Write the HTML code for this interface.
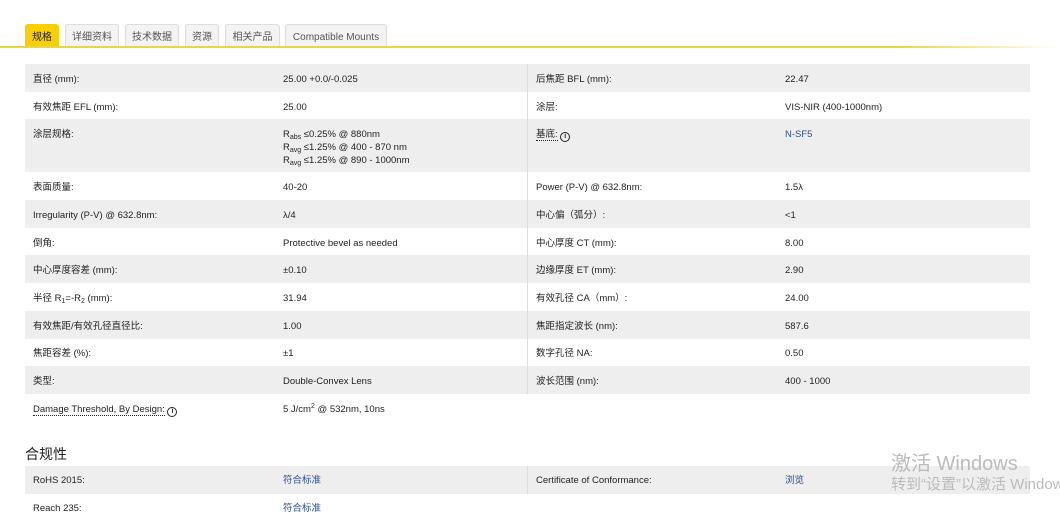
<!DOCTYPE html>
<html><head><meta charset="utf-8"><style>
*{margin:0;padding:0;box-sizing:border-box}
body{width:1060px;height:523px;overflow:hidden;background:#fff;font-family:"Liberation Sans","Noto Sans CJK SC",sans-serif;font-size:9.5px;color:#222;position:relative}
.tab{position:absolute;top:24px;height:23px;border:1px solid #ddd;border-bottom:none;background:#f3f3f3;border-radius:3px 3px 0 0;color:#555;font-size:10px;text-align:center;line-height:26px}
.tab.a{background:#f8cf00;border-color:#f8cf00;color:#222}
.bar{position:absolute;left:0;top:46px;width:1060px;height:2px;background:linear-gradient(90deg,#e9d54a 85%,#fff)}
.r{position:absolute;height:28px}
.g{background:#eee}
.t{position:absolute;line-height:1.4;margin-top:2px}
.lk{color:#2a4f8f}
sub{font-size:7px;vertical-align:-2px;line-height:0}
sup{font-size:7px;vertical-align:4px;line-height:0}
.dl{border-bottom:1px dotted #222}
.i{display:inline-block;width:10px;height:10px;border:1.5px solid #222;border-radius:50%;font-size:7px;line-height:7px;text-align:center;font-weight:bold;vertical-align:-1px}
.vl{position:absolute;left:527px;top:64px;width:1px;height:330px;background:#ddd}
.wm{position:absolute;color:#bbb;left:891px;white-space:nowrap}
</style></head><body>
<div class="tab a" style="left:25px;width:34px">规格</div>
<div class="tab" style="left:65px;width:54px">详细资料</div>
<div class="tab" style="left:125px;width:54px">技术数据</div>
<div class="tab" style="left:185px;width:34px">资源</div>
<div class="tab" style="left:225px;width:55px">相关产品</div>
<div class="tab" style="left:285px;width:102px">Compatible Mounts</div>
<div class="bar"></div>

<div class="r g" style="left:25px;width:1005px;top:64px"></div>
<div class="r g" style="left:25px;width:1005px;top:119px;height:53px"></div>
<div class="r g" style="left:25px;width:1005px;top:200px"></div>
<div class="r g" style="left:25px;width:1005px;top:255px"></div>
<div class="r g" style="left:25px;width:1005px;top:311px"></div>
<div class="r g" style="left:25px;width:1005px;top:366px"></div>
<div class="vl"></div>

<div class="t" style="left:33px;top:71px">直径 (mm):</div><div class="t" style="left:283px;top:71px">25.00 +0.0/-0.025</div>
<div class="t" style="left:536px;top:71px">后焦距 BFL (mm):</div><div class="t" style="left:785px;top:71px">22.47</div>

<div class="t" style="left:33px;top:99px">有效焦距 EFL (mm):</div><div class="t" style="left:283px;top:99px">25.00</div>
<div class="t" style="left:536px;top:99px">涂层:</div><div class="t" style="left:785px;top:99px">VIS-NIR (400-1000nm)</div>

<div class="t" style="left:33px;top:126px">涂层规格:</div>
<div class="t" style="left:283px;top:126px;line-height:13px">R<sub>abs</sub> ≤0.25% @ 880nm<br>R<sub>avg</sub> ≤1.25% @ 400 - 870 nm<br>R<sub>avg</sub> ≤1.25% @ 890 - 1000nm</div>
<div class="t" style="left:536px;top:126px"><span class="dl">基底:</span> <span class="i">i</span></div><div class="t lk" style="left:785px;top:126px">N-SF5</div>

<div class="t" style="left:33px;top:179px">表面质量:</div><div class="t" style="left:283px;top:179px">40-20</div>
<div class="t" style="left:536px;top:179px">Power (P-V) @ 632.8nm:</div><div class="t" style="left:785px;top:179px">1.5λ</div>

<div class="t" style="left:33px;top:207px">Irregularity (P-V) @ 632.8nm:</div><div class="t" style="left:283px;top:207px">λ/4</div>
<div class="t" style="left:536px;top:207px">中心偏（弧分）:</div><div class="t" style="left:785px;top:207px">&lt;1</div>

<div class="t" style="left:33px;top:235px">倒角:</div><div class="t" style="left:283px;top:235px">Protective bevel as needed</div>
<div class="t" style="left:536px;top:235px">中心厚度 CT (mm):</div><div class="t" style="left:785px;top:235px">8.00</div>

<div class="t" style="left:33px;top:262px">中心厚度容差 (mm):</div><div class="t" style="left:283px;top:262px">±0.10</div>
<div class="t" style="left:536px;top:262px">边缘厚度 ET (mm):</div><div class="t" style="left:785px;top:262px">2.90</div>

<div class="t" style="left:33px;top:290px">半径 R<sub>1</sub>=-R<sub>2</sub> (mm):</div><div class="t" style="left:283px;top:290px">31.94</div>
<div class="t" style="left:536px;top:290px">有效孔径 CA（mm）:</div><div class="t" style="left:785px;top:290px">24.00</div>

<div class="t" style="left:33px;top:318px">有效焦距/有效孔径直径比:</div><div class="t" style="left:283px;top:318px">1.00</div>
<div class="t" style="left:536px;top:318px">焦距指定波长 (nm):</div><div class="t" style="left:785px;top:318px">587.6</div>

<div class="t" style="left:33px;top:345px">焦距容差 (%):</div><div class="t" style="left:283px;top:345px">±1</div>
<div class="t" style="left:536px;top:345px">数字孔径 NA:</div><div class="t" style="left:785px;top:345px">0.50</div>

<div class="t" style="left:33px;top:373px">类型:</div><div class="t" style="left:283px;top:373px">Double-Convex Lens</div>
<div class="t" style="left:536px;top:373px">波长范围 (nm):</div><div class="t" style="left:785px;top:373px">400 - 1000</div>

<div class="t" style="left:33px;top:401px"><span class="dl">Damage Threshold, By Design:</span> <span class="i">i</span></div><div class="t" style="left:283px;top:401px">5 J/cm<sup>2</sup> @ 532nm, 10ns</div>

<div class="t" style="left:25px;top:443px;font-size:14px">合规性</div>
<div class="r g" style="left:25px;width:1005px;top:466px"></div>
<div style="position:absolute;left:527px;top:466px;width:1px;height:28px;background:#ddd"></div>
<div class="t" style="left:33px;top:472px">RoHS 2015:</div><div class="t lk" style="left:283px;top:472px">符合标准</div>
<div class="t" style="left:536px;top:472px">Certificate of Conformance:</div><div class="t lk" style="left:785px;top:472px">浏览</div>
<div class="t" style="left:33px;top:500px">Reach 235:</div><div class="t lk" style="left:283px;top:500px">符合标准</div>

<div class="wm" style="top:447px;font-size:20px">激活 Windows</div>
<div class="wm" style="top:473px;font-size:15px">转到“设置”以激活 Windows。</div>
</body></html>
